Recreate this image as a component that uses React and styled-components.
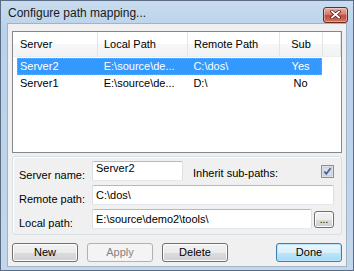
import React from "react";
import styled, { createGlobalStyle } from "styled-components";

const GlobalStyle = createGlobalStyle`
  html, body {
    margin: 0;
    padding: 0;
    background: #ffffff;
  }
  body {
    font-family: "Liberation Sans", Arial, sans-serif;
    font-size: 11px;
    color: #000000;
  }
`;

const columns = [
  { key: "server", title: "Server", w: 85 },
  { key: "local", title: "Local Path", w: 90 },
  { key: "remote", title: "Remote Path", w: 92 },
  { key: "sub", title: "Sub", w: 43, align: "center" },
];

const rows = [
  { server: "Server2", local: "E:\\source\\de...", remote: "C:\\dos\\", sub: "Yes", selected: true },
  { server: "Server1", local: "E:\\source\\de...", remote: "D:\\", sub: "No" },
];

const Window = styled.div`
  width: 354px;
  height: 271px;
  box-sizing: border-box;
  border: 1px solid #5a6d84;
  padding: 0 6px 3px 6px;
  background: linear-gradient(#c9dcef, #b9d1ea 30px, #c3d7ec);
  display: flex;
  flex-direction: column;
`;

const TitleBar = styled.div`
  height: 22px;
  display: flex;
  align-items: center;
  justify-content: space-between;
  padding-left: 1px;
  margin-right: -1px;
`;

const Title = styled.span`
  font-family: "Liberation Sans", Arial, sans-serif;
  font-size: 12px;
  color: #1a1a1a;
  padding-top: 1px;
`;

const CloseButton = styled.div`
  width: 25px;
  height: 16px;
  box-sizing: border-box;
  margin-top: 5px;
  border: 1px solid #6b2a22;
  border-radius: 3px;
  background: linear-gradient(#e8b0a6, #d77a6b 45%, #c24a36 55%, #d3735f);
  box-shadow: inset 0 0 0 1px rgba(255, 255, 255, 0.35);
  display: flex;
  align-items: center;
  justify-content: center;
`;

const Client = styled.div`
  flex: 1;
  border: 1px solid #9fb3c9;
  background: #f0f0f0;
  padding: 7px 4px 4px 4px;
  display: flex;
  flex-direction: column;
`;

const ListView = styled.div`
  height: 122px;
  box-sizing: border-box;
  border: 1px solid #828790;
  background: #ffffff;
  overflow: hidden;
`;

const Header = styled.div`
  height: 24px;
  display: flex;
  background: linear-gradient(#ffffff, #ffffff 50%, #f6f7f8 50%, #f2f3f5);
  border-bottom: 1px solid #eaecee;
`;

const HeaderCell = styled.div`
  width: ${(p) => p.$w}px;
  box-sizing: border-box;
  flex: ${(p) => (p.$fill ? 1 : "none")};
  padding: 0 ${(p) => p.$pad || 6}px;
  border-right: 1px solid #e3e5e8;
  line-height: 24px;
  text-align: ${(p) => p.$align || "left"};
  white-space: nowrap;
`;

const Rows = styled.div`
  padding: 1px 0 0 4px;
`;

const Row = styled.div`
  display: flex;
  width: 305px;
  height: 17px;
  box-sizing: border-box;
  background: ${(p) => (p.$selected ? "#3399ff" : "transparent")};
  color: ${(p) => (p.$selected ? "#ffffff" : "#000000")};
  outline: ${(p) => (p.$selected ? "1px dotted #e49a3c" : "none")};
  outline-offset: -1px;
`;

const Cell = styled.div`
  width: ${(p) => p.$w}px;
  box-sizing: border-box;
  padding: 0 ${(p) => p.$pad || 6}px;
  line-height: 17px;
  text-align: ${(p) => p.$align || "left"};
  white-space: nowrap;
  overflow: hidden;
`;

const GroupBox = styled.div`
  margin-top: 3px;
  height: 79px;
  box-sizing: border-box;
  border: 1px solid #d5dfe5;
  border-radius: 3px;
  box-shadow: inset 1px 1px 0 #ffffff;
  padding: 4px 7px 0 6px;
  display: grid;
  grid-template-columns: 73px 1fr;
  grid-auto-rows: 20px;
  row-gap: 4px;
  align-items: center;
`;

const Label = styled.div`
  align-self: end;
  line-height: 12px;
  white-space: nowrap;
`;

const FieldLine = styled.div`
  display: flex;
  align-items: center;
  height: 20px;
`;

const TextBox = styled.div`
  height: 20px;
  box-sizing: border-box;
  width: ${(p) => (p.$w ? `${p.$w}px` : "auto")};
  flex: ${(p) => (p.$w ? "none" : 1)};
  border: 1px solid #dbdfe6;
  border-top-color: #b5b9c1;
  border-bottom-color: #e3e9ef;
  border-radius: 2px;
  background: #ffffff;
  padding: 0 3px;
  line-height: ${(p) => (p.$top ? 12 : 18)}px;
  white-space: nowrap;
  overflow: hidden;
`;

const InlineLabel = styled.div`
  margin-left: 10px;
  align-self: flex-end;
  margin-bottom: 2px;
  line-height: 12px;
  white-space: nowrap;
`;

const CheckBox = styled.div`
  margin-left: auto;
  width: 13px;
  height: 13px;
  margin-top: 1px;
`;

const BrowseButton = styled.div`
  width: 20px;
  height: 17px;
  margin-left: 2px;
  box-sizing: border-box;
  border: 1px solid #707070;
  border-radius: 3px;
  background: linear-gradient(#f2f2f2, #ebebeb 50%, #dddddd 50%, #cfcfcf);
  box-shadow: inset 0 0 0 1px #fcfcfc;
  text-align: center;
  line-height: 15px;
  font-size: 10px;
`;

const ButtonBar = styled.div`
  margin-top: 8px;
  display: flex;
  gap: 9px;
`;

const Button = styled.div`
  width: 66px;
  height: 19px;
  box-sizing: border-box;
  margin-left: ${(p) => (p.$default ? "auto" : 0)};
  border: 1px solid ${(p) => (p.$disabled ? "#adb2b5" : p.$default ? "#3c7fb1" : "#707070")};
  border-radius: 3px;
  background: ${(p) =>
    p.$disabled
      ? "#f4f4f4"
      : p.$default
      ? "linear-gradient(#eaf6fd, #d9f0fc 50%, #bee6fd 50%, #a7d9f5)"
      : "linear-gradient(#f2f2f2, #ebebeb 50%, #dddddd 50%, #cfcfcf)"};
  box-shadow: inset 0 0 0 1px ${(p) => (p.$disabled ? "#f4f4f4" : p.$default ? "#b9e3fa" : "#fcfcfc")};
  color: ${(p) => (p.$disabled ? "#838383" : "#000000")};
  text-align: center;
  line-height: 17px;
`;

const CloseGlyph = () => (
  <svg width="11" height="9" viewBox="0 0 11 9">
    <path d="M2 1.5 L9 7.5 M9 1.5 L2 7.5" stroke="#5b2320" strokeWidth="3.4" strokeLinecap="square" />
    <path d="M2 1.5 L9 7.5 M9 1.5 L2 7.5" stroke="#ffffff" strokeWidth="1.8" strokeLinecap="square" />
  </svg>
);

const CheckGlyph = () => (
  <svg width="13" height="13" viewBox="0 0 13 13">
    <rect x="0.5" y="0.5" width="12" height="12" fill="#f4f4f4" stroke="#8e8f8f" />
    <rect x="2" y="2" width="9" height="9" fill="#d8dee8" stroke="#c3cad6" strokeWidth="1" />
    <path d="M3.3 6.5 L5.3 8.8 L9.6 3.2" fill="none" stroke="#4a5f8f" strokeWidth="1.8" />
  </svg>
);

export default function App() {
  return (
    <>
      <GlobalStyle />
      <Window>
        <TitleBar>
          <Title>Configure path mapping...</Title>
          <CloseButton>
            <CloseGlyph />
          </CloseButton>
        </TitleBar>
        <Client>
          <ListView>
            <Header>
              {columns.map((c, i) => (
                <HeaderCell key={c.key} $w={c.w} $align={c.align} $pad={i === 0 ? 7 : 6}>
                  {c.title}
                </HeaderCell>
              ))}
              <HeaderCell $fill />
            </Header>
            <Rows>
              {rows.map((r) => (
                <Row key={r.server} $selected={r.selected}>
                  {columns.map((c, i) => (
                    <Cell key={c.key} $w={i === 0 ? c.w - 4 : c.w} $align={c.align} $pad={i === 0 ? 3 : 6}>
                      {r[c.key]}
                    </Cell>
                  ))}
                </Row>
              ))}
            </Rows>
          </ListView>
          <GroupBox>
            <Label>Server name:</Label>
            <FieldLine>
              <TextBox $w={91} $top>Server2</TextBox>
              <InlineLabel>Inherit sub-paths:</InlineLabel>
              <CheckBox>
                <CheckGlyph />
              </CheckBox>
            </FieldLine>
            <Label>Remote path:</Label>
            <FieldLine>
              <TextBox>C:\dos\</TextBox>
            </FieldLine>
            <Label>Local path:</Label>
            <FieldLine>
              <TextBox>E:\source\demo2\tools\</TextBox>
              <BrowseButton>...</BrowseButton>
            </FieldLine>
          </GroupBox>
          <ButtonBar>
            <Button>New</Button>
            <Button $disabled>Apply</Button>
            <Button>Delete</Button>
            <Button $default>Done</Button>
          </ButtonBar>
        </Client>
      </Window>
    </>
  );
}
